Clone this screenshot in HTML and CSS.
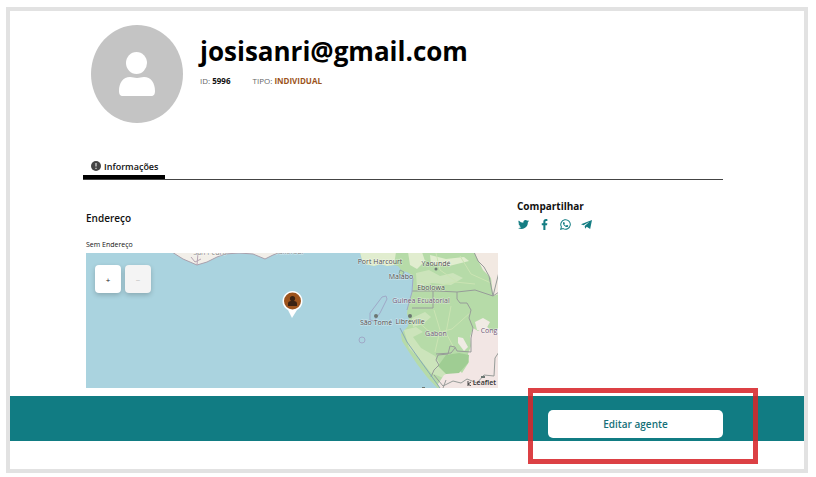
FILE: index.html
```html
<!DOCTYPE html>
<html lang="pt-BR">
<head>
<meta charset="utf-8">
<meta name="viewport" content="width=device-width, initial-scale=1">
<title>josisanri@gmail.com</title>
<link rel="stylesheet" href="styles.css">
</head>
<body>
<div class="frame">
  <header class="profile">
    <svg class="avatar" viewBox="0 0 92 98" aria-hidden="true">
      <ellipse cx="46" cy="49" rx="46" ry="49" fill="#c4c4c4"/>
      <ellipse cx="45.500" cy="38" rx="10.500" ry="11" fill="#fff"/>
      <path d="M28 66c0-8 4-14 11-14 3 0 4 1 7 1s4-1 7-1c7 0 11 6 11 14 0 3-1 5-4 5H32c-3 0-4-2-4-5z" fill="#fff"/>
    </svg>
    <div class="identity">
      <h1>josisanri@gmail.com</h1>
      <p class="meta"><span>ID: <b>5996</b></span><span>TIPO: <b class="kind">INDIVIDUAL</b></span></p>
    </div>
  </header>

  <nav class="tabs">
    <a class="tab" href="#info">
      <svg class="tab-icon" viewBox="0 0 10 10" aria-hidden="true"><circle cx="5" cy="5" r="5" fill="#444"/><path d="M5 2v3.500M5 6.700v1.300" stroke="#ddd" stroke-width="1.200"/></svg>
      Informações
    </a>
  </nav>

  <main class="content" id="info">
    <section class="address">
      <h2>Endereço</h2>
      <p class="note">Sem Endereço</p>
      <div class="map">
        <svg class="map-art" viewBox="0 0 412 135" preserveAspectRatio="xMidYMid slice" role="img" aria-label="Mapa">
          <rect width="412" height="135" fill="#aad3df"/>
          <g fill="#f2efe9" stroke="#a9a0ad" stroke-width="1">
            <path d="M86-1 97 6l14 6 10-3 10-5 8-3 14-1 14 1 12 5 8-4 8-3z"/>
          </g>
          <path d="M111 12 112 0M105 4l4 5 6-3" fill="none" stroke="#b7a5b4"/>
          <path d="M274-1l2 8 3 4 9 2 7-2 6 2 7-1 4 1 4 5 5 1 6 4v9l-2 10-3 9-1 10 2 5-1 7-7 8 1 7 7 11 8 12 10 13 14 15h60V-1z" fill="#b6dba8"/>
          <path d="M274-1l2 8 3 4 9 2 7-2 6 2 7-1 2-13zM322-1h14l3 9-8 8-7-4zM344 2l16 4 18-2 5 4-20 5-18-2z" fill="#e1edcf"/>
          <path d="M330 20l13-3 11 6 13-3 10 5-12 7-19-2-15 5zM326 65l13-6 6 5-8 7-10 3zM318 77l12-3 7 5-10 5 8 11 14 8 8 13 10 2-7 8-15-6-12-15-10-10z" fill="#d8eac5" opacity=".65"/>
          <path d="M388-1h25v42l-6 2-2-18-8-8-5-10z" fill="#f2e9e2"/>
          <path d="M387 75l5 3 8-5 6 5 7-3v61h-59l-2-5 6-9 14-6 4 4 7-11-1-8 3-8-1-9z" fill="#f2e6e4"/>
          <path d="M372 84l5 1 5 9-4 4-6-8zM389 69l8-4 7 4-5 9-8-1z" fill="#f0ebe4"/>
          <path d="M360 102l13-2 10 2-1 8-9 10-13 1-8-8z" fill="#9fcd93"/>
          <path d="M335 28l12 6 22-5 20 2M350 0l4 17 17 12M374 3l11 18 20 9M330 67l16 14 20-5 19-17M348 57l6 20-5 22M365 53l-5 27 7 13" fill="none" stroke="#cbe4b3"/>
          <g fill="none" stroke="#979c99" stroke-width="1">
            <path d="M326 38h25l20 1v7l3 4h7l4 7-2 8 4 10-2 10v14l-14-1-2-4-5-1-2 8-10 1-2 5 3 5-5 5-3 7"/>
            <path d="M371 39l18-2 9 3 9 3 6-4M388-1l4 9 6 6 5 9 4 20 6-24"/>
            <path d="M326 55h21V38M350 101l15-1 4-5M348 122l9 11 10-5 8 2 6-4 10 4 7-8 10 1 1-18 4-6M357 135l3-8"/>
            <path d="M314 75l7 14 15 21 18 25" stroke="#86a9b6"/>
          </g>
          <g fill="none" stroke="#9fa9c7">
            <path d="M300 43l-4 1-12 16v7l4 1 6-8 7-14zM327 25l-1 14-5 18"/>
            <circle cx="276" cy="87" r="3"/>
          </g>
          <path d="M314 17l4 2-2 4-3-2z" fill="#b6dba8" stroke="#8aa49d"/>
          <g fill="#6c7772"><circle cx="350" cy="16" r="1.500"/><circle cx="290" cy="63" r="2"/><circle cx="324" cy="63" r="2"/><path d="M395 123h4v2h-4zM336 134h3v2h-3z"/></g>
          <g class="places">
            <text x="294" y="11">Port Harcourt</text>
            <text x="350" y="13">Yaoundé</text>
            <text x="315" y="26">Malabo</text>
            <text x="345" y="37">Ebolowa</text>
            <text x="290" y="72">São Tomé</text>
            <text x="324" y="71">Libreville</text>
            <g class="country">
              <text x="335" y="50">Guinea Ecuatorial</text>
              <text x="350" y="83">Gabon</text>
              <text x="403" y="80">Cong</text>
            </g>
            <text class="faint" x="124" y="2">San Pedro</text>
            <text class="faint" x="203" y="1">Takoradi</text>
          </g>
          <path d="M206 65l-4-8a10 10 0 1 1 9 0z" fill="#fff"/>
          <circle cx="206.500" cy="48" r="8.500" fill="#9c531c"/>
          <circle cx="206.500" cy="45.500" r="2.600" fill="#3a2212"/>
          <path d="M202 53v-2c0-3 2-3 4.500-3s4.500 0 4.500 3v2z" fill="#3a2212"/>
        </svg>
        <div class="zoom">
          <button type="button" aria-label="Aproximar">+</button>
          <button type="button" aria-label="Afastar" disabled>−</button>
        </div>
        <a class="credit" href="#leaflet"><svg viewBox="0 0 4 6" aria-hidden="true"><path d="M1 1v5M4 2 1 4l3 2" fill="none" stroke="#444"/></svg>Leaflet</a>
      </div>
    </section>

    <aside class="share">
      <h2>Compartilhar</h2>
      <div class="networks">
        <a href="#twitter" aria-label="Twitter"><svg viewBox="0 0 24 24"><path fill="currentColor" d="M24 4.600a10 10 0 0 1-2.800.8 5 5 0 0 0 2.100-2.700 10 10 0 0 1-3.100 1.200 4.900 4.900 0 0 0-8.400 4.500A14 14 0 0 1 1.700 3.200a4.900 4.900 0 0 0 1.500 6.500 5 5 0 0 1-2.200-.6 4.900 4.900 0 0 0 3.900 4.900 5 5 0 0 1-2.200.1 4.900 4.900 0 0 0 4.600 3.400A10 10 0 0 1 0 19.500a14 14 0 0 0 21.500-12.400A10 10 0 0 0 24 4.600z"/></svg></a>
        <a href="#facebook" aria-label="Facebook"><svg viewBox="0 0 24 24"><path fill="currentColor" d="M9.500 24V13.500H6V9.300h3.500V6c0-3.900 2.300-6 5.800-6 1.200 0 2.300.1 3 .3v3.900h-2.200c-1.600 0-2.100.8-2.100 2.200v2.900h4.200l-.7 4.200H14V24z"/></svg></a>
        <a href="#whatsapp" aria-label="WhatsApp"><svg viewBox="0 0 24 24"><path fill="none" stroke="currentColor" stroke-width="2.200" d="M1.500 22.500 3 17a10.400 10.400 0 1 1 4 4z"/><path fill="currentColor" d="M8.500 6.500c-1 0-2 1.300-2 2.700 0 3.300 5 8.500 8.500 8.500 1.600 0 3-1.100 3-2.500 0-.8-2.500-2-3.100-2-.7 0-1 1.500-1.700 1.500-1 0-3.700-2.500-3.700-3.300 0-.6 1-1 1-1.700 0-.8-1-3.200-2-3.200z"/></svg></a>
        <a href="#telegram" aria-label="Telegram"><svg viewBox="0 0 24 24"><path fill="currentColor" d="M24 2 20 22l-7.500-5L9 21l-1-6L18.500 6 5.500 13.500 0 11.500z"/></svg></a>
      </div>
    </aside>
  </main>

  <footer class="actions">
    <div class="action">
      <button class="edit" type="button">Editar agente</button>
      <span class="highlight"></span>
    </div>
  </footer>
</div>
</body>
</html>
```
FILE: styles.css
```css
* {
  box-sizing: border-box;
}

body {
  margin: 0;
  padding: 7px 8px 4px 6px;
  background: #fff;
  color: #111;
  font-family: "Open Sans", "Noto Sans", sans-serif;
}

h1, h2, p {
  margin: 0;
}

a {
  color: inherit;
  text-decoration: none;
}

svg {
  display: block;
}

.frame {
  border: 4px solid #e2e2e2;
  padding: 14px 0 28px;
}

.profile {
  display: flex;
  gap: 17px;
  padding: 0 81px;
}

.avatar {
  flex: none;
  width: 92px;
  height: 98px;
}

.identity {
  padding-top: 8px;
}

h1 {
  color: #000;
  font-size: 26px;
  line-height: 36px;
}

.meta {
  display: flex;
  gap: 22px;
  margin-top: 6px;
  color: #666;
  font-size: 8px;
  line-height: 12px;
}

.meta b {
  color: #111;
}

.meta .kind {
  color: #9c531c;
}

.tabs {
  display: flex;
  margin: 34px 81px 0 73px;
  border-bottom: 1px solid #444;
}

.tab {
  display: flex;
  align-items: center;
  gap: 3px;
  height: 22px;
  padding: 0 7px 0 8px;
  border-bottom: 4px solid #000;
  font-size: 9px;
  font-weight: 600;
}

.tab-icon {
  width: 10px;
  height: 10px;
}

.content {
  display: grid;
  grid-template-columns: 412fr 206fr;
  gap: 19px;
  padding: 18px 81px 0 76px;
}

.address h2 {
  margin-top: 12px;
  font-size: 10px;
  font-weight: 600;
  line-height: 16px;
}

.note {
  margin: 13px 0 2px;
  font-size: 7px;
  line-height: 12px;
}

.map {
  position: relative;
}

.map-art {
  width: 100%;
  height: 135px;
}

.places {
  fill: #4c4c4c;
  stroke: #fff;
  stroke-opacity: .5;
  stroke-width: 1px;
  paint-order: stroke;
  font-size: 7px;
  text-anchor: middle;
}

.country {
  fill: #6d5575;
}

.faint {
  fill: #888;
}

.zoom {
  position: absolute;
  top: 12px;
  left: 9px;
  display: flex;
  gap: 4px;
}

.zoom button {
  width: 26px;
  height: 28px;
  padding: 0;
  border: 0;
  border-radius: 4px;
  background: #fff;
  box-shadow: 0 2px 5px rgba(0, 0, 0, .2);
  color: #222;
  font: 400 8px "Open Sans", sans-serif;
}

.zoom button:disabled {
  background: #f4f4f4;
  color: #bbb;
}

.credit {
  position: absolute;
  right: 2px;
  bottom: 0;
  display: flex;
  align-items: center;
  gap: 2px;
  color: #333;
  font-size: 7px;
  font-weight: 600;
  line-height: 10px;
}

.credit svg {
  width: 4px;
  height: 6px;
}

.share h2 {
  font-size: 10px;
  line-height: 16px;
}

.networks {
  display: flex;
  gap: 10px;
  margin-top: 5px;
  padding-left: 1px;
  color: #147d83;
}

.networks svg {
  width: 11px;
  height: 11px;
}

.actions {
  display: flex;
  justify-content: flex-end;
  margin-top: 8px;
  padding: 14px 81px 3px;
  background: #117c83;
}

.action {
  position: relative;
}

.edit {
  display: block;
  width: 175px;
  height: 28px;
  border: 0;
  border-radius: 5px;
  background: #fff;
  color: #147078;
  font: 600 10px "Open Sans", sans-serif;
}

.highlight {
  position: absolute;
  inset: -22px -35px -26px -20px;
  border: 5px solid rgba(215, 38, 42, .88);
  pointer-events: none;
}
```
